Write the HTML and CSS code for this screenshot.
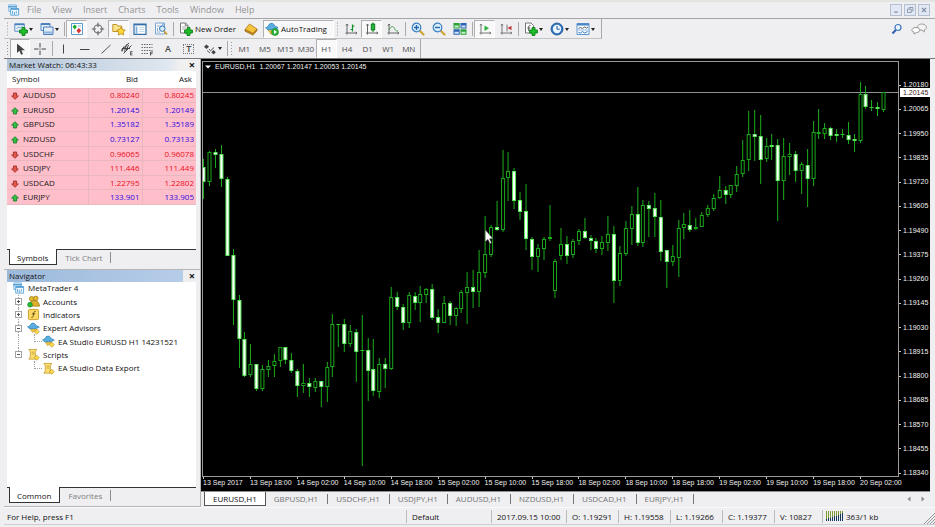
FILE: index.html
```
<!DOCTYPE html>
<html lang="en">
<head>
<meta charset="utf-8">
<title>MetaTrader 4</title>
<link rel="stylesheet" href="styles.css">
</head>
<body>
<svg class="defs" aria-hidden="true">
  <defs>
    <symbol id="plus" viewBox="0 0 8 8"><path d="M2.7.5h2.6v2.2h2.2v2.6H5.3v2.2H2.7V5.3H.5V2.7h2.2z" fill="#1fbf2a" stroke="#0b7d17" stroke-width=".8"/></symbol>
    <symbol id="i-app" viewBox="0 0 14 14"><path d="M2 1h8v7H2z" fill="#eaf5fd" stroke="#6fb0dd"/><path d="M1.5 3h9" stroke="#4b97d0" stroke-width="1.5"/><path d="M4 5h8.500v7H4z" fill="#f4faff" stroke="#5ba3d6"/><path d="M4 5.500h8.500" stroke="#4b97d0" stroke-width="1.500"/><path d="M6 7.500v3.500M8 8.500v3M10 7.500v3" stroke="#5ba3d6"/></symbol>
    <symbol id="i-newchart" viewBox="0 0 14 14"><path d="M.8 1.800h9.500v7.400H.8z" fill="#e9f3fb" stroke="#5b8fc4"/><path d="M.8 2.500h9.500" stroke="#4a80ba" stroke-width="1.400"/><path d="M2.500 7l2-2 2 1 2-2" fill="none" stroke="#6fa5cf"/><use href="#plus" x="5" y="5" width="9" height="9"/></symbol>
    <symbol id="i-profile" viewBox="0 0 14 14"><path d="M1 1.500h9v7H1z" fill="#e5effa" stroke="#5586c0"/><path d="M1 2.300h9" stroke="#4a7dbb" stroke-width="1.400"/><path d="M3.500 5h9.500v7.500H3.500z" fill="#e1edfa" stroke="#4a7dbb"/><path d="M3.500 10.500H13" stroke="#8bb2dc" stroke-width="2"/></symbol>
    <symbol id="i-market" viewBox="0 0 14 14"><path d="M1.500 1.500h11v11h-11z" fill="#fdfefe" stroke="#5c9ccb"/><path d="M4.800 2.500l2 2.300-2 2.700-2.300-2.700z" fill="#18a52a"/><path d="M8.800 6l2.400 2.500-2.400 2.900-2.300-2.700z" fill="#d73232"/><path d="M8 3.500h3M8 5h3M3 10h2" stroke="#b9d2e6"/></symbol>
    <symbol id="i-target" viewBox="0 0 14 14"><circle cx="7" cy="7" r="4" fill="none" stroke="#666" stroke-width="1.100"/><path d="M7 .8v4.200M7 9v4.200M.8 7H5M9 7h4.200" stroke="#666" stroke-width="1.200"/></symbol>
    <symbol id="i-folder" viewBox="0 0 14 14"><path d="M.8 2.500h4l1 1.500h4v5.500h-9z" fill="#fbe48c" stroke="#c4942a"/><path d="M9 5l1.400 2.500 2.900.5-2 2 .4 3L9 11.700 6.300 13l.4-3-2-2 2.900-.5z" fill="#ffd836" stroke="#b9891b" stroke-width=".8"/></symbol>
    <symbol id="i-data" viewBox="0 0 14 14"><path d="M1 2h12v10.300H1z" fill="#fff" stroke="#356ea8" stroke-width="1.200"/><path d="M1 2.700h12" stroke="#356ea8" stroke-width="1.400"/><path d="M2.600 4.500h1.800v7H2.600z" fill="#7eaedb"/><path d="M6 5.500h5.500M6 7.500h5.500M6 9.500h5.500" stroke="#c3d9ec"/></symbol>
    <symbol id="i-tester" viewBox="0 0 14 14"><path d="M1.500 1h9v11h-9z" fill="#f4f8fc" stroke="#7aa5cf"/><path d="M3 4h5M3 10h3M3.500 6v3M5.500 5v3" stroke="#8faecb"/><circle cx="8.300" cy="6.700" r="2.700" fill="#d6ebfa" stroke="#3b78b6"/><path d="M10 9l3 3.500" stroke="#c89a2e" stroke-width="1.800"/><path d="M9 1.500v2" stroke="#3b78b6"/></symbol>
    <symbol id="i-order" viewBox="0 0 14 14"><path d="M1.500 1h5l2.500 2.500V11H1.500z" fill="#fff" stroke="#777"/><path d="M6.300 1v2.700H9" fill="none" stroke="#777"/><path d="M3 5h4M3 7h4" stroke="#aaa"/><use href="#plus" x="5" y="5" width="9" height="9"/></symbol>
    <symbol id="i-book" viewBox="0 0 14 14"><path d="M1 7.500L5.500 2 13 7 9 11.500z" fill="#f3c43c" stroke="#b07a18" stroke-width=".8"/><path d="M1 7.500v1.700L9 13.200l4-4.500V7L9 11.500z" fill="#c78a1d" stroke="#94640f" stroke-width=".6"/></symbol>
    <symbol id="i-auto" viewBox="0 0 14 14"><path d="M2.500 7L6 12.500l5.500-5z" fill="#f0c73e" stroke="#b88c1b" stroke-width=".6"/><path d="M.6 5.500C2 5.300 3 4.800 3.800 3 4.600 1.200 7 .800 8.300 1.800c1 .8 1 2.200 2.400 2.700 1.200.400 2.200.700 2.400 1.400C11 7.300 8 7.200 6.500 7.700 4 8.300 1.500 7.500.6 5.500z" fill="#58aee0" stroke="#2a78ae" stroke-width=".7"/><circle cx="10" cy="10" r="3.500" fill="#2bb43a" stroke="#108420" stroke-width=".6"/><path d="M9 8.100v3.800l3-1.900z" fill="#fff"/></symbol>
    <symbol id="i-bars" viewBox="0 0 14 14"><path d="M3 2v10.500M1.500 11H13M2 3.500L3 2l1 1.500M11.500 10l1.500 1-1.500 1" fill="none" stroke="#666"/><path d="M8.500 2.500v7M6.500 7.500h2M8.500 4h2" stroke="#13922a" stroke-width="1.200"/></symbol>
    <symbol id="i-candle" viewBox="0 0 14 14"><path d="M2.500 2v10.500M1 11H13M1.500 3.500l1-1.500 1 1.500M11.500 10l1.500 1-1.500 1" fill="none" stroke="#666"/><path d="M8 .500v9.500" stroke="#0a7a1a"/><path d="M6.300 2h3.400v6H6.300z" fill="#25b53a" stroke="#0a7a1a"/></symbol>
    <symbol id="i-line" viewBox="0 0 14 14"><path d="M3 2v10.500M1.500 11H13M2 3.500L3 2l1 1.500M11.500 10l1.500 1-1.500 1" fill="none" stroke="#666"/><path d="M3 8c2-4 4-4.500 5.500-1.500S11 9 12 9" fill="none" stroke="#3a9a4a"/></symbol>
    <symbol id="i-zin" viewBox="0 0 14 14"><path d="M8.500 8.500l4 4" stroke="#d0a435" stroke-width="2.200" stroke-linecap="round"/><circle cx="5.500" cy="5.500" r="4.300" fill="#d8edfb" stroke="#3a80c4" stroke-width="1.200"/><path d="M3 5.500h5M5.500 3v5" stroke="#2668b0" stroke-width="1.400"/></symbol>
    <symbol id="i-zout" viewBox="0 0 14 14"><path d="M8.500 8.500l4 4" stroke="#d0a435" stroke-width="2.200" stroke-linecap="round"/><circle cx="5.500" cy="5.500" r="4.300" fill="#d8edfb" stroke="#3a80c4" stroke-width="1.200"/><path d="M3 5.500h5" stroke="#2668b0" stroke-width="1.400"/></symbol>
    <symbol id="i-tile" viewBox="0 0 14 14"><path d="M.5 1h6.200v5.500H.5zM7.500 7.300h6v5.500h-6z" fill="#2ba338"/><path d="M7.500 1h6v5.500h-6zM.5 7.300h6.200v5.500H.5z" fill="#2c64b4"/><path d="M1.500 3.500h4.200v2H1.500zM8.500 9.800h4v2h-4z" fill="#c9efcd"/><path d="M8.500 3.500h4v2h-4zM1.500 9.800h4.200v2H1.500z" fill="#d4e4f7"/></symbol>
    <symbol id="i-scroll" viewBox="0 0 14 14"><path d="M3 2v10.500M1.500 11H13M2 3.500L3 2l1 1.500M11.500 10l1.500 1-1.500 1" fill="none" stroke="#777"/><path d="M6.500 3.500v5.500l4.500-2.700z" fill="#2bb43a"/></symbol>
    <symbol id="i-shift" viewBox="0 0 14 14"><path d="M3 2v10.500M1.500 11H13M2 3.500L3 2l1 1.500M11.500 10l1.500 1-1.500 1M8 2.500v7" fill="none" stroke="#777"/><path d="M8.500 6l4-2.300v4.600z" fill="#c23a3a"/></symbol>
    <symbol id="i-ind" viewBox="0 0 14 14"><path d="M1.500 1h5.500l2.500 2.500V11h-8z" fill="#fff" stroke="#777"/><path d="M6.500 3.500c-1.500-.5-1.800.5-1.800 1.700V9M3.300 6h3" fill="none" stroke="#555"/><use href="#plus" x="5" y="5" width="9" height="9"/></symbol>
    <symbol id="i-clock" viewBox="0 0 14 14"><circle cx="7" cy="7" r="6" fill="#2d74bf" stroke="#1b4f8d" stroke-width=".8"/><circle cx="7" cy="7" r="4.200" fill="#e9f5fe"/><path d="M7 4v3.200h2.700" fill="none" stroke="#2a5c94"/></symbol>
    <symbol id="i-tmpl" viewBox="0 0 14 14"><path d="M1 1.500h12v11H1z" fill="#f5faff" stroke="#5f96cf"/><path d="M1 2.500h12" stroke="#4a87c6" stroke-width="2"/><path d="M2.500 6.500l2-1 2 1 2-1.500 2 1 1.500-1" fill="none" stroke="#666"/><path d="M1.500 8h11" stroke="#9cc0e2"/><path d="M2.500 10.500l2 .5 2-1.500 2 1.500 3-1.500" fill="none" stroke="#3f7fc0"/></symbol>
    <symbol id="i-arrow" viewBox="0 0 14 14"><path d="M4 1.500v9.500l2.500-2.200 1.600 3.900 1.900-.8-1.600-3.700H12z" fill="#444"/></symbol>
    <symbol id="i-cross" viewBox="0 0 14 14"><path d="M7 1v4.500M7 8.500V13M1 7h4.500M8.500 7H13M6.500 7h1" stroke="#444"/></symbol>
    <symbol id="i-vline" viewBox="0 0 14 14"><path d="M6.500 2.500v9" stroke="#444"/></symbol>
    <symbol id="i-hline" viewBox="0 0 14 14"><path d="M2 7.500h9.500" stroke="#444"/></symbol>
    <symbol id="i-trend" viewBox="0 0 14 14"><path d="M2.500 11.500l9-8.500" stroke="#555"/></symbol>
    <symbol id="i-channel" viewBox="0 0 14 14"><path d="M1 8.500L9 1M3.500 11.500l8-8M2 9.500l2-5M4.500 9.500l2-7M6.500 8l2-5M2 6.500h8" stroke="#444" fill="none"/><path d="M12.500 9.500h-2v3.500h2M10.500 11.200h2" stroke="#444" fill="none" stroke-width=".8"/></symbol>
    <symbol id="i-fibo" viewBox="0 0 14 14"><path d="M1.500 2.500h11M1.500 5.500h11M1.500 8.500h11M1.500 11.500h7" stroke="#666" stroke-dasharray="1.500 1"/><path d="M10.500 13.500v-3.500h2.500M10.500 11.700h2" stroke="#333" fill="none" stroke-width=".8"/></symbol>
    <symbol id="i-shapes" viewBox="0 0 14 14"><path d="M3.500 2.500l2.500 2.200-2.500 2.200L1 4.700z" fill="#444"/><path d="M6 7l1.500 1.800L11 5.500M4 8.500l3 2.500" fill="none" stroke="#555"/><path d="M10.500 8l2.300 2.200-2.300 2.200-2.200-2.200z" fill="#444"/></symbol>
    <symbol id="i-up" viewBox="0 0 8 8"><path d="M4 .7L7.400 4H5.600v3H2.400V4H.6z" fill="#31bf45" stroke="#0f7a20" stroke-width=".8"/></symbol>
    <symbol id="i-down" viewBox="0 0 8 8"><path d="M4 7.300L.6 4h1.800V1h3.200v3h1.800z" fill="#e0574c" stroke="#9c231c" stroke-width=".8"/></symbol>
    <symbol id="i-accounts" viewBox="0 0 14 14"><circle cx="5" cy="4" r="2.500" fill="#e5b82e" stroke="#94700f" stroke-width=".7"/><circle cx="9.500" cy="3.700" r="2.500" fill="#e5b82e" stroke="#94700f" stroke-width=".7"/><path d="M2 12c0-8 11.500-8 11.500 0z" fill="#ddb02b" stroke="#94700f" stroke-width=".7"/><circle cx="3.200" cy="10.500" r="2.600" fill="#28b83a" stroke="#11801f" stroke-width=".6"/></symbol>
    <symbol id="i-func" viewBox="0 0 14 14"><rect x="1.500" y="1.500" width="11" height="11" rx="1.500" fill="#fbd964" stroke="#c79a26"/><path d="M9.300 3.700C7.500 3.200 7.300 5 7 6.500 6.700 8.700 6.500 10.500 4.800 10.200M5.300 6.300h3.500" fill="none" stroke="#604a10"/></symbol>
    <symbol id="i-expert" viewBox="0 0 14 14"><path d="M3 7l3 4.500 5-4z" fill="#efc647" stroke="#b48a22" stroke-width=".5"/><path d="M.6 5C2 5 3 4.300 3.800 2.800 4.600 1 7.300.800 8.400 1.800c1 .8 1 1.900 2.400 2.400 1.200.400 2.200.700 2.400 1.400C11 7 8 7 6.500 7.300 4 7.700 1.500 7 .6 5z" fill="#58aee0" stroke="#2a78ae" stroke-width=".7"/><path d="M10.500 7.700l2.700 2.700-2.700 2.700-2.700-2.700z" fill="#ffdb49" stroke="#b48a22" stroke-width=".7"/></symbol>
    <symbol id="i-script" viewBox="0 0 14 14"><path d="M2 1.500h8.500L9 4v5.500l2 2.500H2l1.500-2.500V4z" fill="#fbe070" stroke="#bf942a" stroke-width=".8"/><path d="M5 4.500h3M5 6.500h3" stroke="#c9a43c"/><path d="M10.500 7.700l2.700 2.700-2.700 2.700-2.700-2.700z" fill="#ffdb49" stroke="#b48a22" stroke-width=".7"/></symbol>
  </defs>
</svg>

<div class="app">
  <header class="menubar">
    <svg class="icon menu-logo"><use href="#i-app"/></svg>
    <nav class="menus">
      <button>File</button><button>View</button><button>Insert</button><button>Charts</button><button>Tools</button><button>Window</button><button>Help</button>
    </nav>
    <div class="winbtns">
      <button aria-label="Minimize"><svg viewBox="0 0 12 12"><path d="M4 8.500h4" stroke="#7c8ba3" stroke-width="1.500"/></svg></button>
      <button aria-label="Restore"><svg viewBox="0 0 12 12"><path d="M5 4.500V3h4.500v4H8M3 5h4.500v4H3z" fill="none" stroke="#7c8ba3"/></svg></button>
      <button aria-label="Close"><svg viewBox="0 0 12 12"><path d="M3.500 3.500l5 5M8.500 3.500l-5 5" stroke="#7c8ba3" stroke-width="1.500"/></svg></button>
    </div>
  </header>

  <div class="bars">
    <div class="toolbar toolbar-main">
      <span class="grip"></span>
      <button class="tool drop" aria-label="New chart"><svg class="icon"><use href="#i-newchart"/></svg></button>
      <button class="tool drop" aria-label="Profiles"><svg class="icon"><use href="#i-profile"/></svg></button>
      <span class="sep"></span>
      <button class="tool on" aria-label="Market Watch"><svg class="icon"><use href="#i-market"/></svg></button>
      <button class="tool" aria-label="Data Window"><svg class="icon"><use href="#i-target"/></svg></button>
      <button class="tool on" aria-label="Navigator"><svg class="icon"><use href="#i-folder"/></svg></button>
      <button class="tool" aria-label="Terminal"><svg class="icon"><use href="#i-data"/></svg></button>
      <button class="tool" aria-label="Strategy Tester"><svg class="icon"><use href="#i-tester"/></svg></button>
      <span class="sep"></span>
      <button class="tool labelled"><svg class="icon"><use href="#i-order"/></svg>New Order</button>
      <button class="tool" aria-label="MetaEditor"><svg class="icon"><use href="#i-book"/></svg></button>
      <button class="tool labelled auto on"><svg class="icon"><use href="#i-auto"/></svg>AutoTrading</button>
      <span class="grip"></span>
      <button class="tool" aria-label="Bar chart"><svg class="icon"><use href="#i-bars"/></svg></button>
      <button class="tool on" aria-label="Candlesticks"><svg class="icon"><use href="#i-candle"/></svg></button>
      <button class="tool" aria-label="Line chart"><svg class="icon"><use href="#i-line"/></svg></button>
      <span class="sep"></span>
      <button class="tool" aria-label="Zoom in"><svg class="icon"><use href="#i-zin"/></svg></button>
      <button class="tool" aria-label="Zoom out"><svg class="icon"><use href="#i-zout"/></svg></button>
      <button class="tool" aria-label="Tile windows"><svg class="icon"><use href="#i-tile"/></svg></button>
      <span class="sep"></span>
      <button class="tool on" aria-label="Auto scroll"><svg class="icon"><use href="#i-scroll"/></svg></button>
      <button class="tool" aria-label="Chart shift"><svg class="icon"><use href="#i-shift"/></svg></button>
      <span class="sep"></span>
      <button class="tool drop" aria-label="Indicators"><svg class="icon"><use href="#i-ind"/></svg></button>
      <button class="tool drop" aria-label="Periods"><svg class="icon"><use href="#i-clock"/></svg></button>
      <button class="tool drop" aria-label="Templates"><svg class="icon"><use href="#i-tmpl"/></svg></button>
    </div>
    <div class="community">
      <button aria-label="Search"><svg viewBox="0 0 12 12"><path d="M4.800 7L1.500 10.500" stroke="#2d5fae" stroke-width="2"/><circle cx="7" cy="4.500" r="3" fill="#eaf3fc" stroke="#3d74bd" stroke-width="1.200"/></svg></button>
      <button aria-label="Chat"><svg class="chat" viewBox="0 0 16 12"><path d="M10.500 1c6 0 6 5.500 2.500 6l.5 2-2.500-1.800C5 7 5.500 1 10.500 1z" fill="#f4f4f4" stroke="#999" stroke-width=".9"/><path d="M5 4.500c5 0 5 4.800.5 5L3 11V9.200C-.500 8.500.5 4.500 5 4.500z" fill="#fff" stroke="#888" stroke-width=".9"/></svg></button>
    </div>
    <div class="toolbar toolbar-draw">
      <span class="grip"></span>
      <button class="tool on" aria-label="Cursor"><svg class="icon"><use href="#i-arrow"/></svg></button>
      <button class="tool" aria-label="Crosshair"><svg class="icon"><use href="#i-cross"/></svg></button>
      <span class="sep"></span>
      <div class="group lines">
        <button class="tool" aria-label="Vertical line"><svg class="icon"><use href="#i-vline"/></svg></button>
        <button class="tool" aria-label="Horizontal line"><svg class="icon"><use href="#i-hline"/></svg></button>
        <button class="tool" aria-label="Trendline"><svg class="icon"><use href="#i-trend"/></svg></button>
        <button class="tool" aria-label="Channel"><svg class="icon"><use href="#i-channel"/></svg></button>
        <button class="tool" aria-label="Fibonacci"><svg class="icon"><use href="#i-fibo"/></svg></button>
        <button class="tool glyph">A</button>
        <button class="tool glyph"><span class="boxed">T</span></button>
      </div>
      <button class="tool drop" aria-label="Arrows"><svg class="icon"><use href="#i-shapes"/></svg></button>
      <span class="sep"></span>
      <span class="grip"></span>
      <div class="group periods">
        <button class="tool">M1</button><button class="tool">M5</button><button class="tool">M15</button><button class="tool">M30</button><button class="tool on">H1</button><button class="tool">H4</button><button class="tool">D1</button><button class="tool">W1</button><button class="tool">MN</button>
      </div>
    </div>
  </div>

  <main class="work">
    <aside class="side">
      <section class="panel market">
        <h2 class="title">Market Watch: 06:43:33<button aria-label="Close Market Watch">×</button></h2>
        <div class="sheet">
          <table class="quotes">
            <thead><tr><th>Symbol</th><th>Bid</th><th>Ask</th></tr></thead>
            <tbody>
              <tr class="down"><td><svg><use href="#i-down"/></svg>AUDUSD</td><td>0.80240</td><td>0.80245</td></tr>
              <tr class="up"><td><svg><use href="#i-up"/></svg>EURUSD</td><td>1.20145</td><td>1.20149</td></tr>
              <tr class="up"><td><svg><use href="#i-up"/></svg>GBPUSD</td><td>1.35182</td><td>1.35189</td></tr>
              <tr class="up"><td><svg><use href="#i-up"/></svg>NZDUSD</td><td>0.73127</td><td>0.73133</td></tr>
              <tr class="down"><td><svg><use href="#i-down"/></svg>USDCHF</td><td>0.96065</td><td>0.96078</td></tr>
              <tr class="down"><td><svg><use href="#i-down"/></svg>USDJPY</td><td>111.446</td><td>111.449</td></tr>
              <tr class="down"><td><svg><use href="#i-down"/></svg>USDCAD</td><td>1.22795</td><td>1.22802</td></tr>
              <tr class="up"><td><svg><use href="#i-up"/></svg>EURJPY</td><td>133.901</td><td>133.905</td></tr>
            </tbody>
          </table>
        </div>
        <div class="tabs"><button class="current">Symbols</button><button>Tick Chart</button></div>
      </section>
      <section class="panel navigator">
        <h2 class="title active">Navigator<button aria-label="Close Navigator">×</button></h2>
        <div class="sheet">
          <ul class="tree">
            <li class="root"><svg class="icon"><use href="#i-app"/></svg>MetaTrader 4</li>
            <li class="branch"><span class="box plus"></span><svg class="icon"><use href="#i-accounts"/></svg>Accounts</li>
            <li class="branch"><span class="box plus"></span><svg class="icon"><use href="#i-func"/></svg>Indicators</li>
            <li class="branch"><span class="box"></span><svg class="icon"><use href="#i-expert"/></svg>Expert Advisors</li>
            <li class="leaf"><span class="elbow"></span><svg class="icon"><use href="#i-expert"/></svg>EA Studio EURUSD H1 14231521</li>
            <li class="branch last"><span class="box"></span><svg class="icon"><use href="#i-script"/></svg>Scripts</li>
            <li class="leaf last"><span class="elbow"></span><svg class="icon"><use href="#i-script"/></svg>EA Studio Data Export</li>
          </ul>
        </div>
        <div class="tabs"><button class="current">Common</button><button>Favorites</button></div>
      </section>
    </aside>

    <section class="desk">
      <div class="chart">
        <div class="plot">
          <svg id="candles" viewBox="203 62 696 414" preserveAspectRatio="none" role="img" aria-label="EURUSD H1 candlesticks"></svg>
          <p class="caption"><svg viewBox="0 0 6 4"><path d="M0 .5h6L3 3.500z" fill="#fff"/></svg><span>EURUSD,H1</span><span>1.20067 1.20147 1.20053 1.20145</span></p>
        </div>
        <div class="prices">
          <span>1.20180</span><span>1.20065</span><span>1.19950</span><span>1.19835</span><span>1.19720</span><span>1.19605</span><span>1.19490</span><span>1.19375</span><span>1.19260</span><span>1.19145</span><span>1.19030</span><span>1.18915</span><span>1.18800</span><span>1.18685</span><span>1.18570</span><span>1.18455</span><span>1.18340</span>
          <b class="last-price">1.20145</b>
        </div>
        <div class="times">
          <span>13 Sep 2017</span><span>13 Sep 18:00</span><span>14 Sep 02:00</span><span>14 Sep 10:00</span><span>14 Sep 18:00</span><span>15 Sep 02:00</span><span>15 Sep 10:00</span><span>15 Sep 18:00</span><span>18 Sep 02:00</span><span>18 Sep 10:00</span><span>18 Sep 18:00</span><span>19 Sep 02:00</span><span>19 Sep 10:00</span><span>19 Sep 18:00</span><span>20 Sep 02:00</span>
        </div>
      </div>
      <div class="chart-tabs">
        <button class="current">EURUSD,H1</button><button>GBPUSD,H1</button><button>USDCHF,H1</button><button>USDJPY,H1</button><button>AUDUSD,H1</button><button>NZDUSD,H1</button><button>USDCAD,H1</button><button>EURJPY,H1</button>
        <span class="pager"><button aria-label="Previous tabs"><svg viewBox="0 0 4 6"><path d="M3.500.5v5L.5 3z" fill="#888"/></svg></button><button aria-label="Next tabs"><svg viewBox="0 0 4 6"><path d="M.5.5v5l3-2.500z" fill="#888"/></svg></button></span>
      </div>
    </section>
  </main>

  <footer class="status">
    <span class="help">For Help, press F1</span>
    <span class="profile">Default</span>
    <span class="stamp">2017.09.15 10:00</span>
    <span>O: 1.19291</span>
    <span>H: 1.19558</span>
    <span>L: 1.19266</span>
    <span>C: 1.19377</span>
    <span class="volume">V: 10827</span>
    <span class="net"><svg viewBox="0 0 18 10" shape-rendering="crispEdges"><path d="M.5 0v10M2.500 0v10M4.500 0v10M6.500 0v10M8.500 0v10M10.500 0v10M12.500 0v10M14.500 0v10M16.500 0v10" stroke="#7f9a35"/><path d="M.5 8v2M2.500 7v3M4.500 7v3M6.500 6v4M8.500 5v5M10.500 5v5M12.500 4v6M14.500 3v7M16.500 2v8" stroke="#16365e"/></svg>363/1 kb</span>
    <svg class="resize" viewBox="0 0 12 12"><path d="M1 12L12 1M4 12l8-8M7 12l5-5M10 12l2-2" stroke="#999"/></svg>
  </footer>
</div>
<script src="chart.js"></script>
</body>
</html>
```
FILE: styles.css
```
* { box-sizing: border-box; }

body {
  margin: 0;
  background: #efeff1;
  color: #111;
  font: 8px/12px "Open Sans", "Noto Sans", sans-serif;
}

button {
  margin: 0;
  padding: 0;
  border: 0;
  background: none;
  color: inherit;
  font: inherit;
}

.defs { position: absolute; width: 0; height: 0; }

.icon { flex: none; width: 14px; height: 14px; }

.app {
  display: flex;
  flex-direction: column;
  height: 100vh;
  padding-left: 4px;
  border-top: 2px solid #e3e5e3;
}

/* Menu */
.menubar {
  display: flex;
  align-items: center;
  flex: none;
  height: 17px;
  padding: 0 5px 0 3px;
  border-bottom: 1px solid #a5a5a8;
}

.menus {
  display: flex;
  flex: 1;
  gap: 11px;
  padding-left: 7px;
  color: #949496;
  font-size: 9px;
}

.menu-logo { width: 13px; height: 13px; }

.winbtns { display: flex; gap: 2px; }

.winbtns button {
  display: flex;
  width: 12px;
  height: 12px;
  border: 1px solid #b4c0d2;
  background: #e2e9f4;
}

/* Toolbars */
.bars {
  display: grid;
  grid-template-columns: auto 1fr;
  grid-template-rows: 20px 19px;
  flex: none;
  border-bottom: 1px solid #77777a;
}

.toolbar {
  display: flex;
  align-items: stretch;
  padding: 1px 3px 0 1px;
  border-right: 1px solid #a8a8aa;
  border-bottom: 1px solid #c2c2c4;
}

.toolbar-draw { justify-self: start; padding: 0 1px; border-bottom: 0; }

.grip {
  flex: none;
  width: 5px;
  margin: 2px 0;
  background: radial-gradient(circle, #98989b 1px, transparent 1px) center / 3px 3px repeat-y;
}

.sep { flex: none; width: 4px; padding: 2px 0; }

.sep::before {
  content: "";
  display: block;
  width: 1px;
  height: 100%;
  margin-left: 2px;
  background: #a9a9ac;
}

.tool {
  display: flex;
  align-items: center;
  justify-content: center;
  flex: none;
  width: 21px;
  border: 1px solid transparent;
}

.toolbar-draw .tool { width: 20px; }

.tool.on {
  border-color: #b0b0b3 #fff #fff #b0b0b3;
  background: #f9f9fa;
}

.toolbar .tool.drop { justify-content: flex-start; width: 26px; padding-left: 3px; }

.tool.drop::after {
  content: "";
  margin-left: 1px;
  border: 2px solid transparent;
  border-top: 3px solid #222;
  border-bottom: 0;
}

.tool.labelled { justify-content: flex-start; gap: 2px; width: 65px; padding-left: 3px; }
.tool.labelled.auto { width: 71px; margin: 0 1px 0 2px; padding-left: 1px; }

.group { display: flex; flex: none; }
.toolbar-draw .group .tool { flex: 1 1 0; width: auto; }
.lines { width: 145px; }
.periods { width: 185px; color: #4c4c4e; }

.glyph { color: #444; font-weight: 600; font-size: 9px; }

.boxed { padding: 0 2px; border: 1px dotted #777; line-height: 8px; }

.community { display: flex; justify-content: flex-end; align-items: center; gap: 8px; padding-right: 8px; }
.community button { display: flex; }
.community svg { width: 12px; height: 12px; }
.community .chat { width: 16px; }

/* Work area */
.work { display: flex; flex: 1; min-height: 0; }

.side { display: flex; flex-direction: column; flex: none; width: 197px; }

.panel {
  display: flex;
  flex-direction: column;
  padding: 0 4px 4px 3px;
  border-right: 1px solid #b5b5b8;
  border-bottom: 1px solid #b5b5b8;
}

.market { flex: 210 0 0; }
.navigator { flex: 238 0 0; padding-bottom: 3px; }

.title {
  display: flex;
  align-items: center;
  justify-content: space-between;
  flex: none;
  height: 12px;
  margin: 0;
  padding-left: 2px;
  background: linear-gradient(90deg, #b3c5d9, #dfe7f0 85%, #f0f0f0 92%);
  font-weight: 400;
  font-size: 8px;
}

.title.active { background: linear-gradient(90deg, #9cb9db, #b6cde8 93%, #efeff1 93%); }

.title button { width: 8px; font-weight: 700; font-size: 11px; line-height: 10px; }

.sheet { flex: 1; min-height: 0; background: #fff; border-bottom: 1px solid #333; }

.quotes {
  width: 100%;
  height: 134px;
  border-collapse: collapse;
  table-layout: fixed;
}

.quotes th, .quotes td { padding: 0 2px 0 0; text-align: right; font-weight: 400; }
.quotes th { height: 17px; padding-right: 4px; }
.quotes th:first-child { width: 81px; padding-left: 5px; text-align: left; }
.quotes th:nth-child(2) { width: 54px; }
.quotes td:first-child { padding-left: 4px; text-align: left; color: #1d171a; }
.quotes td { border: 1px solid #e9b8be; border-left: 0; background: #ffbfca; }
.quotes td:last-child { border-right: 0; }
.quotes td svg { width: 8px; height: 8px; margin-right: 4px; vertical-align: -2px; }
.quotes .down { color: #e8101c; }
.quotes .up { color: #2c08e0; }

.tabs { display: flex; flex: none; height: 15px; padding-left: 2px; color: #7c7c7e; }

.tabs button { height: 11px; margin-top: 2px; padding: 0 8px; border-right: 1px solid #8c8c8e; line-height: 11px; }

.tabs .current {
  height: 16px;
  margin-top: -1px;
  padding: 2px 8px 0 7px;
  border: 1px solid #333;
  border-top: 0;
  background: #fff;
  color: #111;
}

/* Navigator tree */
.tree {
  display: grid;
  grid-template-rows: repeat(7, 1fr);
  height: 93px;
  margin: 0;
  padding: 0 0 0 5px;
  list-style: none;
}

.tree li { display: flex; align-items: center; position: relative; min-height: 0; white-space: nowrap; }
.tree .icon { margin-right: 3px; width: 13px; height: 13px; }
.tree .branch .icon { margin: 0 3px 0 5px; }
.tree .leaf { padding-left: 22px; }
.tree .leaf .icon { margin-left: 7px; }

.tree .branch::before, .tree .leaf:not(.last)::before {
  content: "";
  position: absolute;
  top: 0;
  bottom: 0;
  left: 6px;
  border-left: 1px dotted #a0a0a0;
}

.tree .branch.last::before { bottom: 50%; }

.box {
  position: relative;
  width: 7px;
  height: 7px;
  margin-left: 3px;
  background: linear-gradient(#555, #555) center / 3px 1px no-repeat #fff;
  border: 1px solid #a3a3a3;
}

.box.plus { background: linear-gradient(#555, #555) center / 3px 1px no-repeat, linear-gradient(#555, #555) center / 1px 3px no-repeat, #fff; }

.elbow { width: 8px; height: 8px; margin: -7px -7px 0 0; border: 1px dotted #a0a0a0; border-top: 0; border-right: 0; }

/* Chart window */
.desk { display: flex; flex-direction: column; flex: 1; min-width: 0; padding-right: 5px; }

.chart {
  display: grid;
  grid-template-columns: 1fr 31px;
  grid-template-rows: 1fr 15px;
  flex: 1;
  min-height: 0;
  padding: 2px 0 0 1px;
  background: #000;
  color: #f0f0f0;
  font: 7px/8px "Liberation Sans", Arial, sans-serif;
}

.plot { position: relative; min-height: 0; border: 1px solid #9a9a9a; }
.plot > svg { display: block; position: absolute; width: 100%; height: 100%; }

.caption { display: flex; align-items: center; gap: 4px; position: absolute; top: 1px; left: 2px; margin: 0; }
.caption svg { width: 6px; height: 4px; }

.prices {
  display: flex;
  flex-direction: column;
  justify-content: space-between;
  position: relative;
  height: 396px;
  margin-top: 20px;
}

.prices span { padding-left: 4px; background: linear-gradient(#ccc, #ccc) left center / 2px 1px no-repeat; }

.last-price {
  position: absolute;
  top: 7px;
  left: 1px;
  right: 0;
  padding-left: 3px;
  background: #fff;
  color: #3a1818;
  font-weight: 400;
  line-height: 9px;
}

.times {
  display: grid;
  grid-template-columns: repeat(15, 1fr);
  grid-column: 1 / -1;
  padding: 0 23px 0 1px;
  white-space: nowrap;
}

.times span { padding-top: 2px; background: linear-gradient(#ccc, #ccc) left top / 1px 2px no-repeat; }

.chart-tabs {
  display: flex;
  flex: none;
  height: 16px;
  padding: 0 0 1px 3px;
  border-top: 1px solid #8f8f91;
  color: #747476;
}

.chart-tabs button { height: 10px; margin-top: 2px; padding: 0 9px 0 8px; border-right: 1px solid #777; line-height: 10px; }

.chart-tabs .current {
  height: 14px;
  margin-top: 0;
  padding: 0 8px;
  border: 1px solid #555;
  border-top: 0;
  background: #fff;
  color: #111;
  line-height: 14px;
}

.pager { display: flex; gap: 10px; margin-left: auto; padding-right: 5px; }
.chart-tabs .pager button { padding: 0; border: 0; }
.pager svg { width: 4px; height: 6px; }

/* Status bar */
.status {
  display: flex;
  align-items: center;
  flex: none;
  height: 18px;
  margin-bottom: 2px;
  border-top: 1px solid #fafafa;
  border-bottom: 1px solid #cfcfd1;
}

.status span { width: 52px; padding-left: 5px; border-left: 1px solid #bbb; line-height: 13px; white-space: nowrap; }
.status .help { flex: 1; padding-left: 3px; border: 0; }
.status .profile { width: 85px; }
.status .stamp { width: 75px; }
.status .volume { width: 48px; }
.status .net { display: flex; align-items: center; gap: 2px; width: 101px; padding-left: 3px; }
.net svg { width: 18px; height: 10px; }
.resize { align-self: flex-end; width: 12px; height: 12px; }
```
FILE: chart.js
```
// Each candle: high, body top, body bottom, low, filled (1) or hollow (0).
const candles = [
  [159,167,182,199,1],[151,152,182,186,0],[149,152,155,168,1],[145,154,179,187,1],[177,179,256,256,1],
  [249,255,300,325,1],[295,300,339,368,1],[332,339,376,377,1],[344,364,375,377,0],[364,364,389,391,1],
  [365,369,389,391,0],[360,366,370,377,0],[354,361,366,377,0],[347,347,361,367,0],[347,347,360,364,1],
  [353,360,371,373,1],[369,371,386,397,1],[364,383,386,393,0],[378,383,387,397,1],[378,381,388,392,0],
  [381,381,387,407,1],[362,367,387,402,0],[314,324,367,377,0],[324,324,325,347,0],[319,324,344,352,1],
  [325,331,344,347,0],[329,332,352,382,1],[315,350,351,466,0],[338,350,371,401,1],[339,369,391,396,1],
  [358,364,392,398,0],[358,364,369,388,1],[287,297,369,370,0],[292,297,307,310,1],[304,307,323,330,1],
  [292,295,323,328,0],[292,296,303,310,1],[286,294,303,322,0],[288,289,295,303,0],[284,289,318,320,1],
  [309,317,323,333,1],[296,303,323,323,0],[301,303,316,325,1],[307,308,316,326,0],[290,292,309,313,0],
  [272,287,293,324,0],[270,287,292,308,1],[250,272,292,307,0],[216,254,273,278,0],[225,227,255,257,0],
  [201,227,230,231,1],[150,178,230,232,0],[152,171,178,201,0],[168,171,201,209,1],[192,200,212,220,1],
  [184,211,239,250,1],[237,239,257,270,1],[244,248,257,272,0],[237,239,249,260,0],[205,237,239,241,0],
  [259,261,291,298,0],[228,244,256,260,0],[236,244,256,264,1],[239,241,255,258,0],[229,231,241,245,0],
  [218,231,238,239,1],[235,238,241,250,1],[238,241,249,253,1],[236,242,249,255,0],[216,234,243,251,0],
  [226,234,281,303,1],[246,253,281,286,0],[221,228,254,256,0],[206,214,229,245,0],[187,214,243,246,1],
  [200,205,243,247,0],[201,205,209,237,1],[193,208,217,237,1],[200,217,252,261,1],[250,250,262,288,1],
  [245,256,262,266,0],[220,228,258,277,0],[213,224,228,239,0],[210,225,230,232,1],[218,227,229,230,0],
  [212,215,227,227,0],[205,208,215,217,0],[194,198,209,211,0],[176,190,198,199,0],[186,190,195,204,1],
  [185,185,195,198,0],[166,174,186,192,0],[140,160,174,177,0],[111,134,160,171,0],[110,134,137,161,1],
  [115,136,160,184,1],[138,146,159,162,0],[134,145,147,160,1],[139,145,181,221,1],[138,156,181,200,0],
  [143,154,157,175,0],[151,154,171,182,1],[162,164,171,194,0],[149,165,179,207,1],[121,132,179,186,0],
  [109,132,134,139,0],[123,128,134,139,0],[127,128,136,140,1],[129,134,136,142,1],[129,134,135,138,0],
  [122,135,140,144,1],[134,139,141,152,1],[82,94,141,143,0],[86,94,107,109,1],[100,107,108,111,0],
  [102,107,109,116,1],[92,92,110,112,0]
];

const FIRST_X = 203.3;
const STEP = 5.868;
const NS = "http://www.w3.org/2000/svg";
const svg = document.getElementById("candles");

function add(name, attrs) {
  const node = document.createElementNS(NS, name);
  for (const key in attrs) node.setAttribute(key, attrs[key]);
  svg.appendChild(node);
}

add("path", { d: "M203 92.500H899", stroke: "#8e9599", fill: "none" });

candles.forEach(([high, top, bottom, low, filled], i) => {
  const x = Math.round(FIRST_X + STEP * i) + 0.5;
  add("path", { d: `M${x} ${high}V${low}`, stroke: "#1bb01b", fill: "none" });
  if (bottom - top < 2) {
    add("path", { d: `M${x - 2} ${top + 0.5}h4`, stroke: "#28c828", fill: "none" });
    return;
  }
  add("rect", {
    x: x - 1.5, y: top + 0.5, width: 3, height: bottom - top - 1 || 1,
    fill: filled ? "#fff" : "#000", stroke: filled ? "#55ea55" : "#1aa81a"
  });
});

add("path", {
  d: "M485.500 229.500v12.500l2.800-2.500 2 4.300 1.800-.8-2-4.200h3.500z",
  fill: "#fff", stroke: "#222", "stroke-width": 0.6
});
```
